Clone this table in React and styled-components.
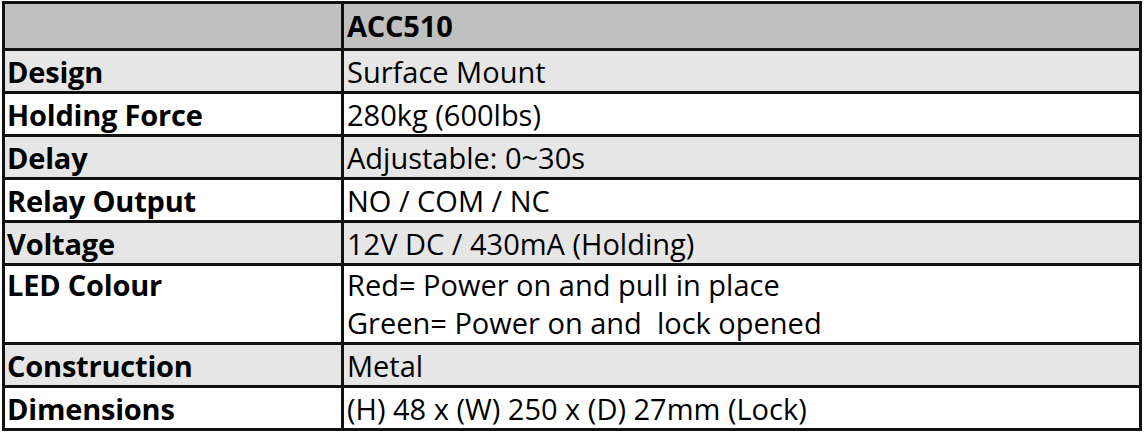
import React from 'react'
import styled, { createGlobalStyle } from 'styled-components'

const GlobalStyle = createGlobalStyle`
    html, body {
        margin: 0;
        padding: 0;
        background: #ffffff;
    }
    body {
        font-family: "Open Sans", "Liberation Sans", sans-serif;
        color: #000000;
    }
`

const Wrap = styled.div`
    padding: 1px 0 0 2px;
`

const Table = styled.table`
    width: 1140px;
    border-collapse: collapse;
    table-layout: fixed;
    border: 3px solid #111111;
`

const Row = styled.tr`
    background: ${p => p.$shade};
`

const Cell = styled.td`
    border: 3px solid #111111;
    padding: ${p => p.$top}px 0 0 ${p => (p.$label ? 2 : 3)}px;
    height: ${p => p.$h}px;
    vertical-align: top;
    font-size: 29px;
    line-height: ${p => p.$lh}px;
    font-weight: ${p => (p.$bold ? 700 : 400)};
    letter-spacing: ${p => (p.$bold ? '-0.2px' : '0')};
    white-space: nowrap;
    overflow: hidden;
    box-sizing: border-box;
`

const specData = [
    { label: 'Design', value: ['Surface Mount'] },
    { label: 'Holding Force', value: ['280kg (600lbs)'] },
    { label: 'Delay', value: ['Adjustable: 0~30s'] },
    { label: 'Relay Output', value: ['NO / COM / NC'] },
    { label: 'Voltage', value: ['12V DC / 430mA (Holding)'] },
    { label: 'LED Colour', value: ['Red= Power on and pull in place', 'Green= Power on and\u00a0 lock opened'] },
    { label: 'Construction', value: ['Metal'] },
    { label: 'Dimensions', value: ['(H) 48 x (W) 250 x (D) 27mm (Lock)'] },
]

export default function App() {
    return (
        <Wrap>
            <GlobalStyle />
            <Table>
                <colgroup>
                    <col style={{ width: '339px' }} />
                    <col />
                </colgroup>
                <tbody>
                    <Row $shade="#c0c0c0">
                        <Cell $h={47} $top={4} $lh={36} $label />
                        <Cell $h={47} $top={4} $lh={36} $bold>ACC510</Cell>
                    </Row>
                    {specData.map((item, i) => {
                        const multi = item.value.length > 1
                        const h = multi ? 79 : 43
                        const lh = multi ? 38 : 36
                        const top = multi ? 0 : 3
                        return (
                            <Row key={item.label} $shade={i % 2 === 0 ? '#e6e6e6' : '#ffffff'}>
                                <Cell $h={h} $top={top} $lh={lh} $label $bold>{item.label}</Cell>
                                <Cell $h={h} $top={top} $lh={lh}>
                                    {item.value.map(v => <div key={v}>{v}</div>)}
                                </Cell>
                            </Row>
                        )
                    })}
                </tbody>
            </Table>
        </Wrap>
    )
}
